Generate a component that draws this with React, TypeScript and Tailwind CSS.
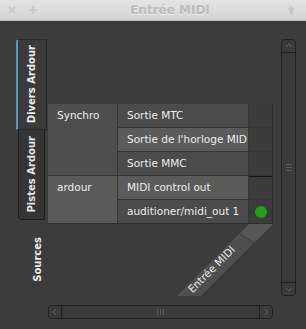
import { Fragment } from "react";

const rows = [
  { name: "Sortie MTC", light: false },
  { name: "Sortie de l'horloge MID", light: true },
  { name: "Sortie MMC", light: false },
  { name: "MIDI control out", light: true },
  { name: "auditioner/midi_out 1", light: false, on: true },
];

function Chevron({ dir }: { dir: "up" | "down" | "left" | "right" }) {
  const pts = {
    up: "2,6 5,3 8,6",
    down: "2,4 5,7 8,4",
    left: "6,2 3,5 6,8",
    right: "4,2 7,5 4,8",
  }[dir];
  return (
    <svg width="10" height="10" viewBox="0 0 10 10">
      <polyline points={pts} fill="none" stroke="#5f5f5f" strokeWidth="1" />
    </svg>
  );
}

function TitleBar() {
  return (
    <div className="h-[21px] shrink-0 flex items-center bg-gradient-to-b from-[#e4e4e4] to-[#d3d3d3] border-b border-[#bdbdbd]">
      <div className="w-[48px] flex items-center pl-[8px] gap-[13px]">
        <svg width="8" height="8" viewBox="0 0 8 8">
          <path d="M1 1 L7 7 M7 1 L1 7" stroke="#c6c6c6" strokeWidth="1.6" />
        </svg>
        <svg width="8" height="8" viewBox="0 0 8 8">
          <path d="M4 0 V8 M0 4 H8" stroke="#c6c6c6" strokeWidth="1.6" />
        </svg>
      </div>
      <div className="flex-1 text-center pl-[12px] font-bold text-[12px] text-[#bcbcbc] [text-shadow:0_1px_0_#ececec]">
        Entrée MIDI
      </div>
      <div className="w-[26px] flex justify-center pr-[4px]">
        <svg width="9" height="10" viewBox="0 0 9 10">
          <path d="M4.5 0.5 L8.5 4.5 H6 V9.5 H3 V4.5 H0.5 Z" fill="#c6c6c6" />
        </svg>
      </div>
    </div>
  );
}

function Tabs() {
  return (
    <div className="w-[48px] shrink-0 flex flex-col pt-[18px]">
      <div className="ml-[16px] w-[31px] h-[91px] bg-[#3a3a3a] border border-[#2a2a2a] border-l-2 border-l-[#5a97b6] rounded-tl-[3px] flex items-center justify-center">
        <span className="[writing-mode:vertical-rl] rotate-180 font-bold text-[10px] text-[#ececec] leading-none">
          Divers Ardour
        </span>
      </div>
      <div className="ml-[18px] w-[27px] h-[90px] bg-[#353535] border border-[#1f1f1f] border-t-0 rounded-bl-[4px] flex items-center justify-center">
        <span className="[writing-mode:vertical-rl] rotate-180 font-bold text-[10px] text-[#e4e4e4] leading-none">
          Pistes Ardour
        </span>
      </div>
      <div className="ml-[33px] mt-[17px] w-[10px] flex justify-center">
        <span className="[writing-mode:vertical-rl] rotate-180 font-bold text-[10px] text-[#ececec] leading-none">
          Sources
        </span>
      </div>
    </div>
  );
}

function Matrix() {
  return (
    <div className="grid grid-cols-[69px_130px_24px] grid-rows-[repeat(5,23px)] gap-px bg-[#363636] border-b border-[#2e2e2e] text-[10.5px] text-[#ececec] leading-none">
      <div className="row-span-3 bg-[#4e4e4e] pl-[9px] pt-[6px]">Synchro</div>
      {rows.map((r, i) => (
        <Fragment key={r.name}>
          {i === 3 && (
            <div className="row-span-2 bg-[#5a5a5a] pl-[9px] pt-[6px]">ardour</div>
          )}
          <div
            className={`${r.light ? "bg-[#5b5b5b]" : "bg-[#4b4b4b]"} pl-[9px] flex items-center whitespace-nowrap overflow-hidden`}
          >
            {r.name}
          </div>
          <div
            className={`bg-[#3b3b3b] border-r border-[#2b2b2b] flex items-center justify-center ${i === 3 ? "border-t border-t-[#161616]" : ""}`}
          >
            {r.on && <div className="w-[12px] h-[12px] rounded-full bg-[#1f9e1f]" />}
          </div>
        </Fragment>
      ))}
    </div>
  );
}

function ColumnLabel() {
  return (
    <svg width="225" height="72" viewBox="0 0 225 72" className="block">
      <polygon points="201,0 225,0 153,72 129,72" fill="#4f4f4f" />
      <polygon points="201,0 225,0 206,19 192,10" fill="#565656" />
      <line x1="192" y1="10" x2="206" y2="19" stroke="#3c3c3c" strokeWidth="1" />
      <text
        x="0"
        y="0"
        transform="translate(166,48) rotate(-45)"
        textAnchor="middle"
        fontSize="10.5"
        fill="#ececec"
        fontFamily="DejaVu Sans, sans-serif"
      >
        Entrée MIDI
      </text>
    </svg>
  );
}

function HScroll() {
  return (
    <div className="mt-[9px] h-[14px] border border-[#222] rounded-[4px] bg-[#3a3a3a] flex">
      <div className="w-[13px] border-r border-[#222] flex items-center justify-center">
        <Chevron dir="left" />
      </div>
      <div className="flex-1 flex items-center justify-center gap-[2px]">
        <div className="w-px h-[6px] bg-[#5a5a5a]" />
        <div className="w-px h-[6px] bg-[#5a5a5a]" />
        <div className="w-px h-[6px] bg-[#5a5a5a]" />
      </div>
      <div className="w-[13px] border-l border-[#222] flex items-center justify-center">
        <Chevron dir="right" />
      </div>
    </div>
  );
}

function VScroll() {
  return (
    <div className="ml-[8px] w-[15px] shrink-0 pt-[18px]">
      <div className="h-[257px] border border-[#222] rounded-[4px] bg-[#3a3a3a] flex flex-col">
        <div className="h-[13px] border-b border-[#222] flex items-center justify-center">
          <Chevron dir="up" />
        </div>
        <div className="flex-1 flex flex-col items-center justify-center gap-[2px]">
          <div className="w-[6px] h-px bg-[#5a5a5a]" />
          <div className="w-[6px] h-px bg-[#5a5a5a]" />
          <div className="w-[6px] h-px bg-[#5a5a5a]" />
        </div>
        <div className="h-[13px] border-t border-[#222] flex items-center justify-center">
          <Chevron dir="down" />
        </div>
      </div>
    </div>
  );
}

export default function App() {
  return (
    <div className="w-[306px] h-[329px] bg-[#3c3c3c] flex flex-col overflow-hidden font-['DejaVu_Sans',sans-serif]">
      <TitleBar />
      <div className="flex flex-1">
        <Tabs />
        <div className="w-[225px] shrink-0 flex flex-col pt-[83px]">
          <Matrix />
          <ColumnLabel />
          <HScroll />
        </div>
        <VScroll />
      </div>
    </div>
  );
}
